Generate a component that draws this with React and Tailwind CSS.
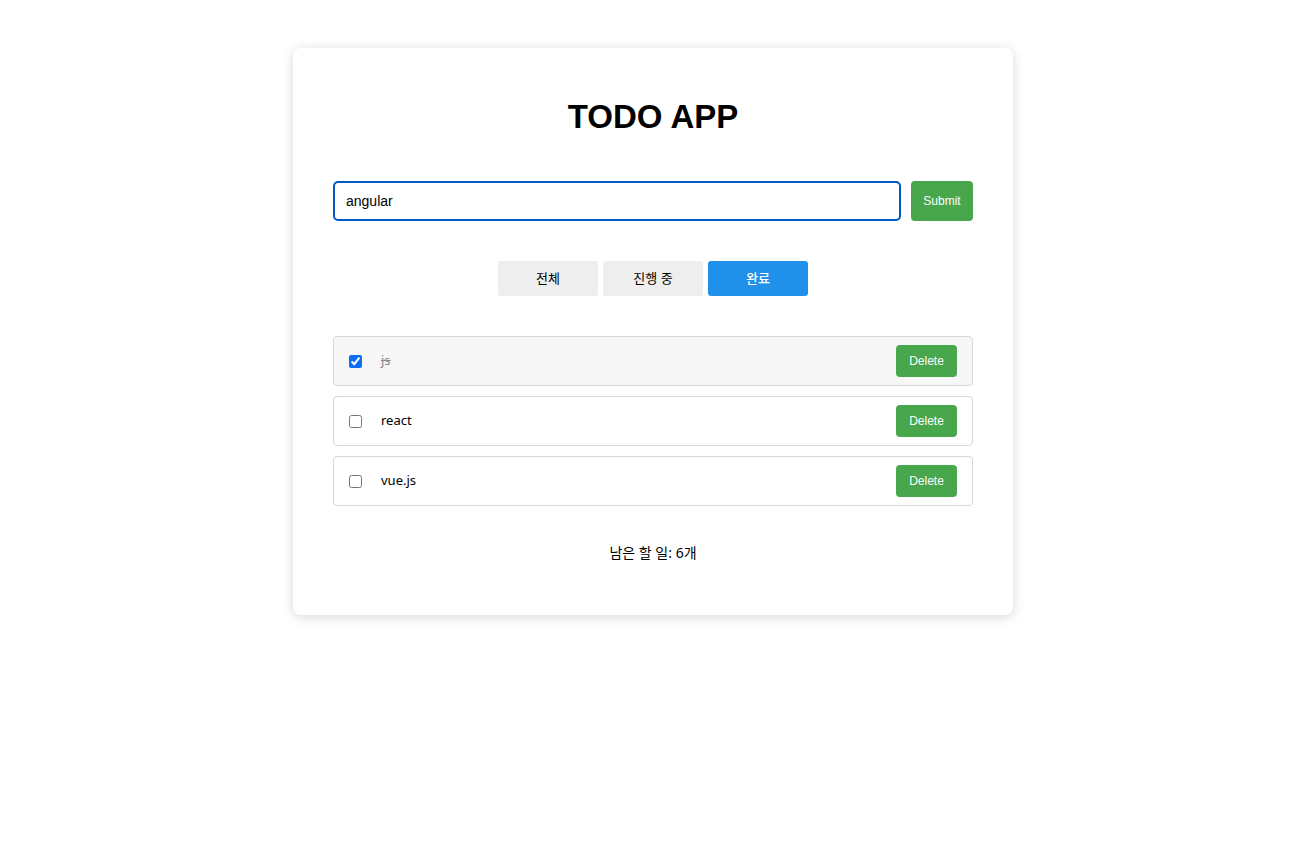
import { useState } from 'react'

const FILTERS = ['전체', '진행 중', '완료']

const INITIAL = [
  { id: 1, text: 'js', done: true },
  { id: 2, text: 'react', done: false },
  { id: 3, text: 'vue.js', done: false },
]

export default function App() {
  const [todos, setTodos] = useState(INITIAL)
  const [value, setValue] = useState('angular')
  const [filter, setFilter] = useState('완료')

  const toggle = (id) =>
    setTodos((list) => list.map((t) => (t.id === id ? { ...t, done: !t.done } : t)))
  const remove = (id) => setTodos((list) => list.filter((t) => t.id !== id))

  return (
    <div className="min-h-screen bg-white pt-[48px] pl-[4px] font-['Noto_Sans','Noto_Sans_CJK_KR',sans-serif] text-black">
      <div className="mx-auto w-[720px] rounded-[8px] bg-white p-[40px] shadow-[0_2px_12px_rgba(0,0,0,0.16)]">
        {/* Title */}
        <h1 className="mt-[10px] mb-[46px] text-center font-['Liberation_Sans','Noto_Sans_CJK_KR',sans-serif] text-[33px] font-bold leading-[37px]">
          TODO APP
        </h1>

        {/* Input row */}
        <form className="flex gap-[10px]" onSubmit={(e) => e.preventDefault()}>
          <input
            value={value}
            onChange={(e) => setValue(e.target.value)}
            className="h-[40px] flex-1 rounded-[5px] border-2 border-[#0058c4] px-[11px] font-['Liberation_Sans',sans-serif] text-[14px] outline-none"
          />
          <button className="h-[40px] w-[62px] rounded-[4px] bg-[#48a64c] font-['Liberation_Sans',sans-serif] text-[12px] font-medium text-white">
            Submit
          </button>
        </form>

        {/* Filters */}
        <div className="mt-[40px] flex justify-center gap-[5px]">
          {FILTERS.map((f) => (
            <button
              key={f}
              onClick={() => setFilter(f)}
              className={`h-[35px] w-[100px] rounded-[3px] font-['Liberation_Sans','Noto_Sans_CJK_KR',sans-serif] text-[13px] ${
                filter === f ? 'bg-[#2190eb] font-medium text-white' : 'bg-[#eeeeee] text-black'
              }`}
            >
              {f}
            </button>
          ))}
        </div>

        {/* List */}
        <ul className="mt-[40px] flex flex-col gap-[10px]">
          {todos.map((t) => (
            <li
              key={t.id}
              className={`flex h-[50px] items-center rounded-[4px] border border-[#d6d6d6] px-[15px] ${
                t.done ? 'bg-[#f7f7f7]' : 'bg-white'
              }`}
            >
              <input
                type="checkbox"
                checked={t.done}
                onChange={() => toggle(t.id)}
                className="h-[13px] w-[13px] accent-[#0b6ff5]"
              />
              <span
                className={`ml-[19px] flex-1 text-[13px] ${
                  t.done ? 'text-[#888] line-through' : 'text-black'
                }`}
              >
                {t.text}
              </span>
              <button
                onClick={() => remove(t.id)}
                className="h-[32px] w-[61px] rounded-[4px] bg-[#48a64c] font-['Liberation_Sans',sans-serif] text-[12px] font-medium text-white"
              >
                Delete
              </button>
            </li>
          ))}
        </ul>

        {/* Footer */}
        <p className="mt-[37px] mb-[12px] text-center text-[14px] leading-[20px]">
          남은 할 일: 6개
        </p>
      </div>
    </div>
  )
}
